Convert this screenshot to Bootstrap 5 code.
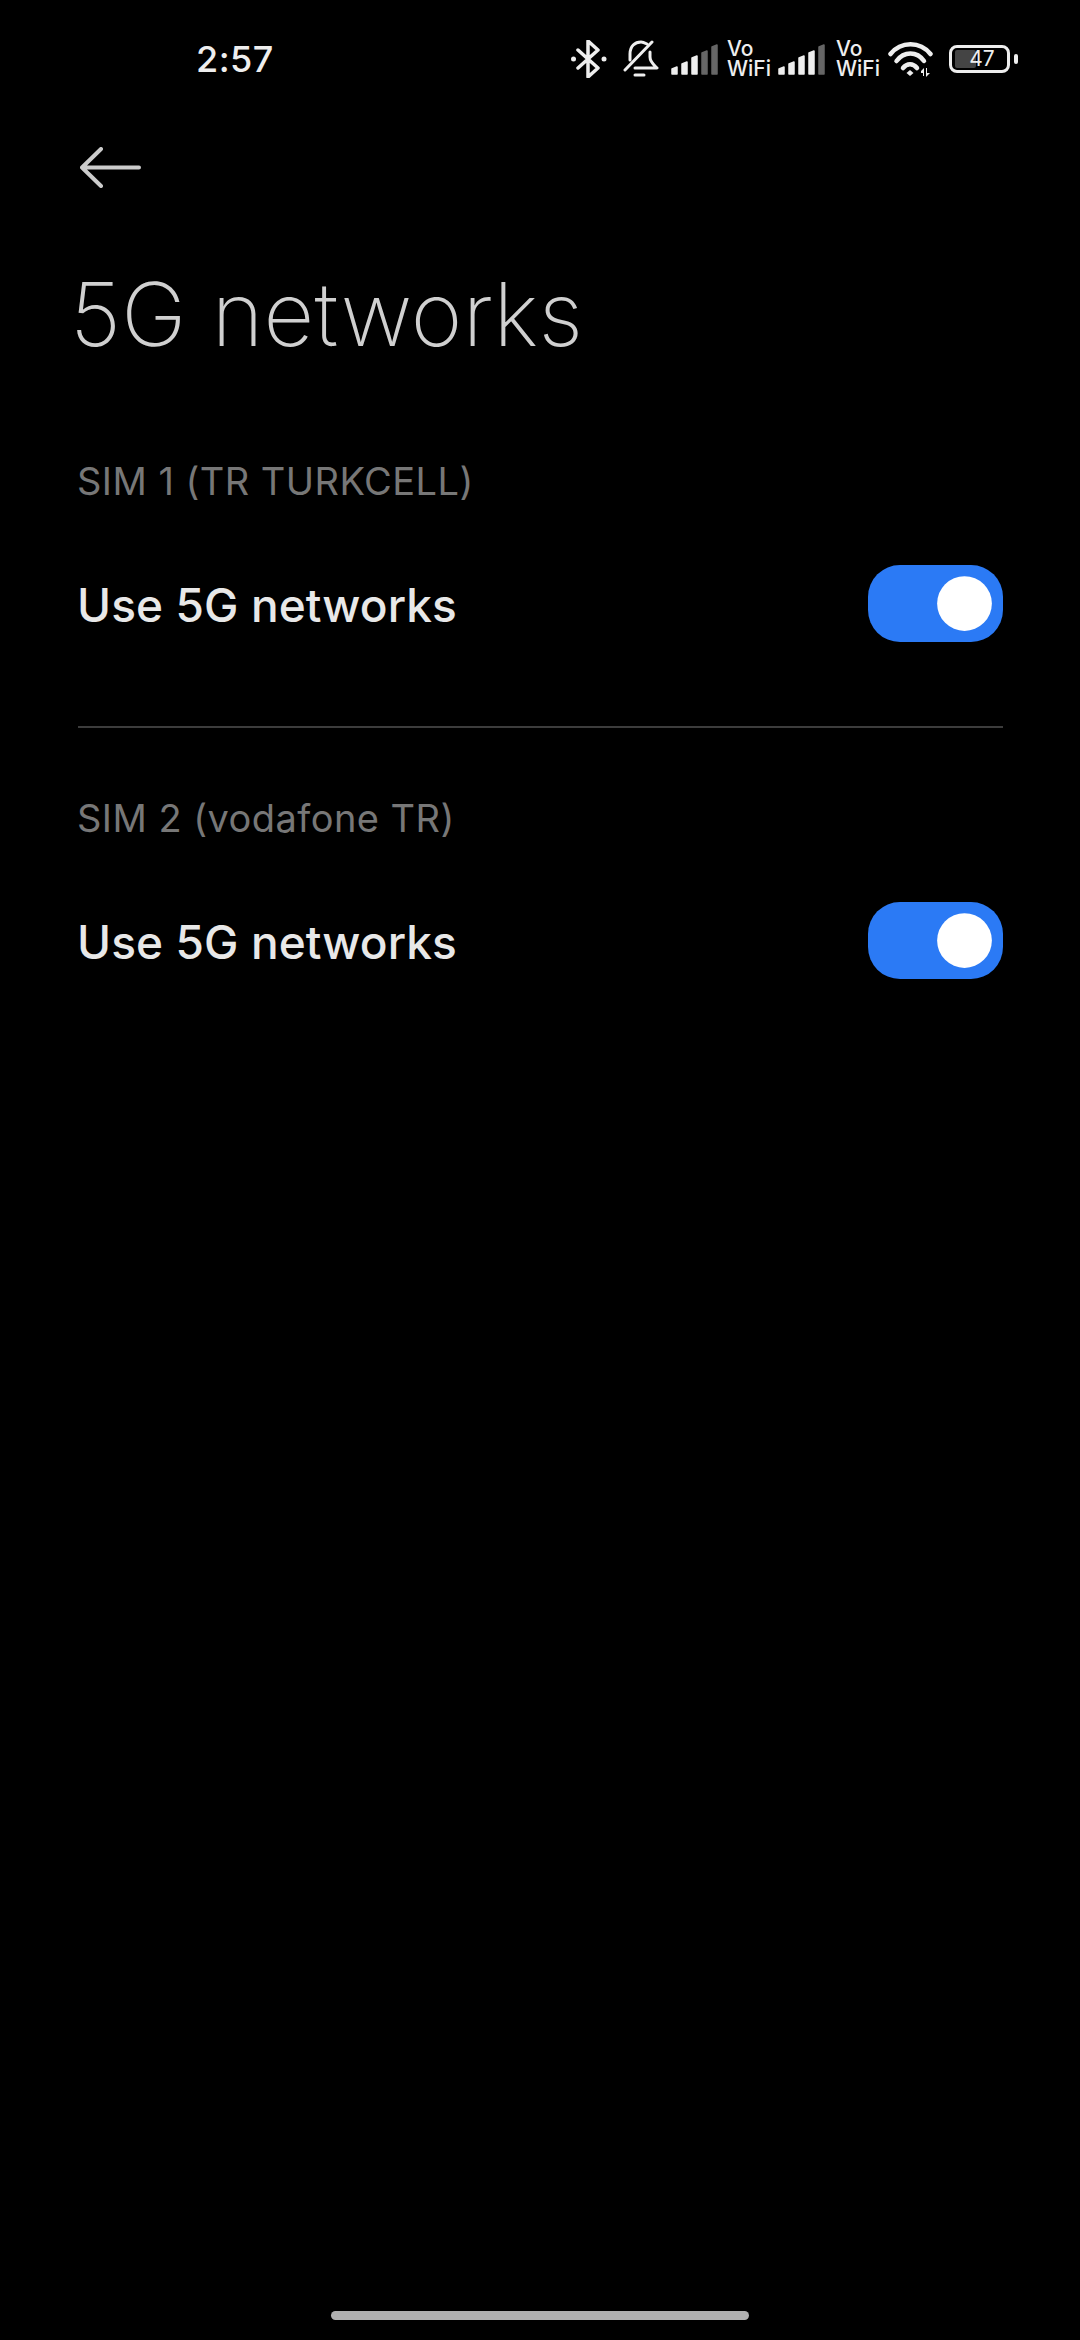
<!DOCTYPE html>
<html lang="en">
<head>
    <meta charset="UTF-8">
    <title>5G networks</title>
    <link href="https://cdn.jsdelivr.net/npm/bootstrap@5.3.0/dist/css/bootstrap.min.css" rel="stylesheet">
    <style>
        html, body { background: #000; }
        body { width: 1080px; height: 2340px; font-family: Inter, "Noto Sans", sans-serif; display: flex; flex-direction: column; }
        .status-row { margin-top: 40px; height: 38px; padding: 0 62px 0 196px; color: #eee; }
        .clock { font-size: 36px; line-height: 38px; font-weight: 450; letter-spacing: .5px; }
        .vo-label { width: 42px; font-size: 21px; line-height: 20px; font-weight: 500; }
        .vo-label span { display: block; }
        .sp-9 { margin-left: 9px; }
        .sp-10 { margin-left: 10px; }
        .sp-11 { margin-left: 11px; }
        .sp-12 { margin-left: 12px; }
        .sp-16 { margin-left: 16px; }
        .batt-box { width: 61px; height: 28px; border: 3px solid #eee; border-radius: 8px; padding: 2px 3px; position: relative; }
        .batt-fill { width: 42%; height: 100%; background: #444; border-radius: 2px; }
        .batt-num { position: absolute; inset: 0 0 0 5px; text-align: center; font-size: 21px; line-height: 22px; color: #eee; }
        .batt-nub { width: 4px; height: 10px; background: #eee; border-radius: 2px; margin-left: 4px; }
        .back-btn { margin: 69px 0 0 80px; width: 61px; height: 41px; line-height: 0; }
        .page-title { margin: 73px 0 0 70px; font-size: 88px; line-height: 106px; font-weight: 250; letter-spacing: .3px; color: #d0d0d0; }
        .sim-block { padding: 0 77px; }
        .sim-first { margin-top: 91px; }
        .sim-next { margin-top: 67px; }
        .sim-name { font-size: 38px; line-height: 46px; color: #777; margin: 0; letter-spacing: .45px; }
        .opt-row { height: 77px; margin-top: 61px; }
        .opt-label { font-size: 46px; line-height: 56px; font-weight: 500; color: #e8e8e8; padding-top: 2px; letter-spacing: .1px; }
        .form-switch.opt-switch { padding: 0; margin: 0; min-height: 0; line-height: 0; }
        .form-switch.opt-switch .form-check-input { width: 135px; height: 77px; margin: 0; border: 0; float: none; background-color: #2b7af5; }
        .form-switch.opt-switch .form-check-input:checked { background-size: 73px; background-position: right 2px center; }
        .sim-rule { margin: 84px 77px 0 78px; border: 0; border-top: 2px solid #3c3c3c; opacity: 1; }
        .home-pill { width: 418px; height: 9px; background: #b0b0b0; border-radius: 5px; margin: auto auto 20px; }
    </style>
</head>
<body>

<div class="status-row d-flex align-items-center justify-content-between">
    <div class="clock">2:57</div>
    <div class="d-flex align-items-center">
        <!-- bluetooth -->
        <svg width="36" height="38" viewBox="0 0 36 38" fill="none" stroke="#eee" stroke-width="3.5" stroke-linecap="round" stroke-linejoin="round">
            <path d="M7 10 L27 28 L17 37 V1 L27 10 L7 28"/>
            <circle cx="2.500" cy="19" r="2.500" fill="#eee" stroke="none"/>
            <circle cx="33" cy="19" r="2.500" fill="#eee" stroke="none"/>
        </svg>
        <!-- muted bell -->
        <svg class="sp-16" width="36" height="38" viewBox="0 0 36 38" fill="none" stroke="#eee" stroke-width="3" stroke-linecap="round" stroke-linejoin="round">
            <path d="M7 20 V14 C7 6 12 2 18 2 C20 2 22 3 24 4"/>
            <path d="M27 12 V17 C27 22 31 25 34 28 H12"/>
            <path d="M29 2 L2 30"/>
            <path d="M12 35 H21"/>
        </svg>
        <!-- signal 1 -->
        <svg class="sp-12" width="47" height="31" viewBox="0 0 47 31" stroke-width="1.500" stroke-linejoin="round">
            <path d="M1 25 L6 23 V30 H1 Z" fill="#eee" stroke="#eee"/>
            <path d="M11 20 L16 18 V30 H11 Z" fill="#eee" stroke="#eee"/>
            <path d="M21 14 L26 12 V30 H21 Z" fill="#eee" stroke="#eee"/>
            <path d="M31 9 L36 7 V30 H31 Z" fill="#666" stroke="#666"/>
            <path d="M41 3 L46 1 V30 H41 Z" fill="#666" stroke="#666"/>
        </svg>
        <div class="vo-label sp-9"><span>Vo</span><span>WiFi</span></div>
        <!-- signal 2 -->
        <svg class="sp-9" width="47" height="31" viewBox="0 0 47 31" stroke-width="1.500" stroke-linejoin="round">
            <path d="M1 25 L6 23 V30 H1 Z" fill="#eee" stroke="#eee"/>
            <path d="M11 20 L16 18 V30 H11 Z" fill="#eee" stroke="#eee"/>
            <path d="M21 14 L26 12 V30 H21 Z" fill="#eee" stroke="#eee"/>
            <path d="M31 9 L36 7 V30 H31 Z" fill="#eee" stroke="#eee"/>
            <path d="M41 3 L46 1 V30 H41 Z" fill="#666" stroke="#666"/>
        </svg>
        <div class="vo-label sp-11"><span>Vo</span><span>WiFi</span></div>
        <!-- wifi -->
        <svg class="sp-10" width="45" height="35" viewBox="0 0 45 35" fill="none" stroke="#eee" stroke-width="4.500" stroke-linecap="round">
            <path d="M2.500 12 C13 -1 32 -1 42.500 12"/>
            <path d="M8.500 19 C16 9 29 9 36 19"/>
            <path d="M15 26 C19 21 25 21 29 26"/>
            <path d="M18.500 31 L22 28 L25.500 31 L22 34 Z" fill="#eee" stroke="none"/>
            <path d="M33 29 L36 26 V34 H35 V31 H33 Z M38 26 H39 V31 H42 L38 35 Z" fill="#eee" stroke="none"/>
        </svg>
        <!-- battery -->
        <div class="batt-box sp-16">
            <div class="batt-fill"></div>
            <div class="batt-num">47</div>
        </div>
        <div class="batt-nub"></div>
    </div>
</div>

<div class="back-btn">
    <svg width="61" height="41" viewBox="0 0 61 41" fill="none" stroke="#ccc" stroke-width="4" stroke-linecap="round" stroke-linejoin="round">
        <path d="M59 20.500 H2 M21 2 L2 20.500 L21 39"/>
    </svg>
</div>

<h1 class="page-title">5G networks</h1>

<div class="sim-block sim-first">
    <p class="sim-name">SIM 1 (TR TURKCELL)</p>
    <div class="opt-row d-flex align-items-center justify-content-between">
        <span class="opt-label">Use 5G networks</span>
        <div class="form-check form-switch opt-switch">
            <input class="form-check-input" type="checkbox" role="switch" checked>
        </div>
    </div>
</div>

<hr class="sim-rule">

<div class="sim-block sim-next">
    <p class="sim-name">SIM 2 (vodafone TR)</p>
    <div class="opt-row d-flex align-items-center justify-content-between">
        <span class="opt-label">Use 5G networks</span>
        <div class="form-check form-switch opt-switch">
            <input class="form-check-input" type="checkbox" role="switch" checked>
        </div>
    </div>
</div>

<div class="home-pill"></div>

<script src="https://cdn.jsdelivr.net/npm/bootstrap@5.3.0/dist/js/bootstrap.bundle.min.js"></script>
</body>
</html>
